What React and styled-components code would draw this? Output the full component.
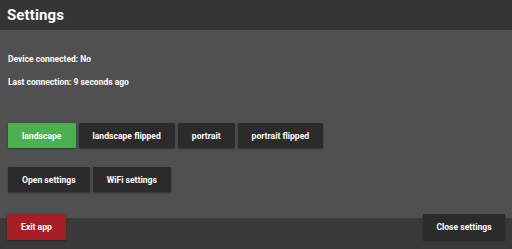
import React, { useState } from "react";
import styled, { createGlobalStyle } from "styled-components";

const GlobalStyle = createGlobalStyle`
  html, body {
    margin: 0;
    padding: 0;
    background: #505050;
    font-family: Roboto, "Liberation Sans", sans-serif;
  }
`;

const Page = styled.div`
  width: 512px;
  height: 249px;
  display: flex;
  flex-direction: column;
  background: #505050;
  color: #fff;
  overflow: hidden;
`;

const Header = styled.div`
  height: 30px;
  flex-shrink: 0;
  background: #353535;
  display: flex;
  align-items: center;
  padding: 0 7px;
`;

const Title = styled.h1`
  margin: 0;
  font-size: 15px;
  font-weight: 700;
  letter-spacing: 0.1px;
`;

const Body = styled.div`
  flex: 1;
  padding: 24px 8px 0;
  display: flex;
  flex-direction: column;
`;

const InfoLine = styled.p`
  margin: 0 0 13px;
  font-size: 8.5px;
  font-weight: 700;
  line-height: 10px;
`;

const ButtonRow = styled.div`
  display: flex;
  gap: 3px;
  margin-top: ${(props) => props.top}px;
`;

const Button = styled.button`
  height: 25px;
  padding: 0 14px;
  border: none;
  border-radius: 1px;
  background: ${(props) =>
    props.variant === "active"
      ? "#4caf50"
      : props.variant === "danger"
      ? "#a51f24"
      : "#2b2b2b"};
  color: #fff;
  font-family: Roboto, "Liberation Sans", sans-serif;
  font-size: 8.6px;
  font-weight: 700;
  box-shadow: 0 1px 2px rgba(0, 0, 0, 0.35);
  cursor: pointer;
`;

const Footer = styled.div`
  height: 31px;
  flex-shrink: 0;
  background: #3a3a3a;
  display: flex;
  justify-content: space-between;
  align-items: flex-start;
  padding: 0 7px;
`;

const FooterButton = styled(Button)`
  height: 26px;
  margin-top: -4px;
  width: ${(props) => props.w}px;
  padding: 0;
`;

const orientations = ["landscape", "landscape flipped", "portrait", "portrait flipped"];

const App = () => {
  const [orientation, setOrientation] = useState("landscape");

  return (
    <Page>
      <GlobalStyle />
      <Header>
        <Title>Settings</Title>
      </Header>
      <Body>
        <InfoLine>Device connected: No</InfoLine>
        <InfoLine>Last connection: 9 seconds ago</InfoLine>
        <ButtonRow top={23}>
          {orientations.map((o) => (
            <Button
              key={o}
              variant={orientation === o ? "active" : undefined}
              onClick={() => setOrientation(o)}
            >
              {o}
            </Button>
          ))}
        </ButtonRow>
        <ButtonRow top={19}>
          <Button>Open settings</Button>
          <Button>WiFi settings</Button>
        </ButtonRow>
      </Body>
      <Footer>
        <FooterButton variant="danger" w={59}>
          Exit app
        </FooterButton>
        <FooterButton w={82}>Close settings</FooterButton>
      </Footer>
    </Page>
  );
};

export default App;
